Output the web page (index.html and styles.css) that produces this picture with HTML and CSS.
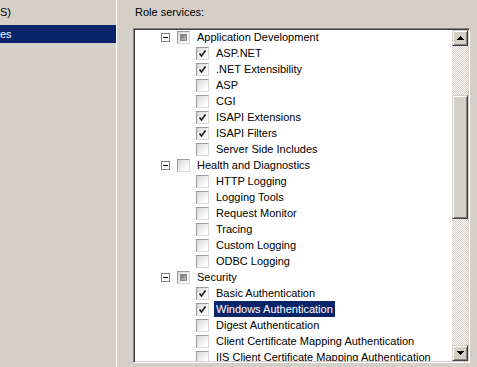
FILE: index.html
```html
<!DOCTYPE html>
<html lang="en">
<head>
    <meta charset="UTF-8">
    <title>Add Role Services</title>
    <link rel="stylesheet" href="styles.css">
</head>
<body>
    <div class="window">
        <aside class="nav">
            <div class="nav-item">S)</div>
            <div class="nav-item selected">es</div>
        </aside>

        <main class="content">
            <div class="label">Role services:</div>

            <div class="listbox">
                <div class="tree-view">
                    <ul class="tree">
                        <li class="row group"><span class="expander"></span><span class="check partial"></span><span class="text">Application Development</span></li>
                        <li class="row item"><span class="check checked"><svg width="9" height="9" viewBox="0 0 9 9"><polyline points="1.5,4.5 3.5,7 7.5,1.5"/></svg></span><span class="text">ASP.NET</span></li>
                        <li class="row item"><span class="check checked"><svg width="9" height="9" viewBox="0 0 9 9"><polyline points="1.5,4.5 3.5,7 7.5,1.5"/></svg></span><span class="text">.NET Extensibility</span></li>
                        <li class="row item"><span class="check"></span><span class="text">ASP</span></li>
                        <li class="row item"><span class="check"></span><span class="text">CGI</span></li>
                        <li class="row item"><span class="check checked"><svg width="9" height="9" viewBox="0 0 9 9"><polyline points="1.5,4.5 3.5,7 7.5,1.5"/></svg></span><span class="text">ISAPI Extensions</span></li>
                        <li class="row item"><span class="check checked"><svg width="9" height="9" viewBox="0 0 9 9"><polyline points="1.5,4.5 3.5,7 7.5,1.5"/></svg></span><span class="text">ISAPI Filters</span></li>
                        <li class="row item"><span class="check"></span><span class="text">Server Side Includes</span></li>

                        <li class="row group"><span class="expander"></span><span class="check"></span><span class="text">Health and Diagnostics</span></li>
                        <li class="row item"><span class="check"></span><span class="text">HTTP Logging</span></li>
                        <li class="row item"><span class="check"></span><span class="text">Logging Tools</span></li>
                        <li class="row item"><span class="check"></span><span class="text">Request Monitor</span></li>
                        <li class="row item"><span class="check"></span><span class="text">Tracing</span></li>
                        <li class="row item"><span class="check"></span><span class="text">Custom Logging</span></li>
                        <li class="row item"><span class="check"></span><span class="text">ODBC Logging</span></li>

                        <li class="row group"><span class="expander"></span><span class="check partial"></span><span class="text">Security</span></li>
                        <li class="row item"><span class="check checked"><svg width="9" height="9" viewBox="0 0 9 9"><polyline points="1.5,4.5 3.5,7 7.5,1.5"/></svg></span><span class="text">Basic Authentication</span></li>
                        <li class="row item"><span class="check checked"><svg width="9" height="9" viewBox="0 0 9 9"><polyline points="1.5,4.5 3.5,7 7.5,1.5"/></svg></span><span class="text selected">Windows Authentication</span></li>
                        <li class="row item"><span class="check"></span><span class="text">Digest Authentication</span></li>
                        <li class="row item"><span class="check"></span><span class="text">Client Certificate Mapping Authentication</span></li>
                        <li class="row item"><span class="check"></span><span class="text">IIS Client Certificate Mapping Authentication</span></li>
                    </ul>
                </div>

                <div class="scrollbar">
                    <div class="sb-btn"><svg width="7" height="4" viewBox="0 0 7 4" shape-rendering="crispEdges"><path d="M3 0h1v1h1v1h1v1h1v1h-7v-1h1v-1h1v-1h1z"/></svg></div>
                    <div class="sb-track before"></div>
                    <div class="sb-thumb"></div>
                    <div class="sb-track after"></div>
                    <div class="sb-btn"><svg width="7" height="4" viewBox="0 0 7 4" shape-rendering="crispEdges"><path d="M0 0h7v1h-1v1h-1v1h-1v1h-1v-1h-1v-1h-1v-1h-1z"/></svg></div>
                </div>
            </div>
        </main>
    </div>
</body>
</html>
```

FILE: styles.css
```css
body {
    margin: 0;
    background: #d4d0c8;
    font-family: 'Liberation Sans', Arial, sans-serif;
    font-size: 11px;
    color: #000;
}

.window {
    display: flex;
    height: 100vh;
    overflow: hidden;
}

/* left wizard steps */
.nav {
    flex: none;
    width: 116px;
    border-right: 1px solid #fff;
    padding-top: 3px;
}

.nav-item {
    height: 18px;
    line-height: 18px;
    margin-bottom: 4px;
    white-space: nowrap;
}

.nav-item.selected {
    background: #0a246a;
    color: #fff;
}

.content {
    padding: 6px 0 0 16px;
}

.label {
    line-height: 13px;
    padding-left: 2px;
    margin-bottom: 9px;
}

/* sunken list box */
.listbox {
    width: 337px;
    height: 335px;
    box-sizing: border-box;
    display: flex;
    padding: 1px;
    background: #fff;
    border: 1px solid;
    border-color: #808080 #fff #fff #808080;
    box-shadow: inset 1px 1px #404040, inset -1px -1px #d4d0c8;
}

.tree-view {
    flex: 1;
    overflow: hidden;
}

.tree {
    list-style: none;
    margin: -1px 0 0 0;
    padding: 0;
}

.row {
    display: flex;
    align-items: center;
    height: 16px;
    white-space: nowrap;
}

.row.group {
    padding-left: 26px;
}

.row.item {
    padding-left: 61px;
}

.expander {
    position: relative;
    flex: none;
    width: 9px;
    height: 9px;
    box-sizing: border-box;
    border: 1px solid #808080;
    background: #fff;
    margin-right: 7px;
}

.expander::after {
    content: "";
    position: absolute;
    left: 1px;
    top: 3px;
    width: 5px;
    height: 1px;
    background: #000;
}

.check {
    flex: none;
    width: 13px;
    height: 13px;
    box-sizing: border-box;
    display: flex;
    align-items: center;
    justify-content: center;
    margin-right: 5px;
    border: 1px solid;
    border-color: #9c9c9c #d8d8d8 #d8d8d8 #9c9c9c;
    background: linear-gradient(135deg, #d6d6d6, #fff 80%);
}

.check svg {
    fill: none;
    stroke: #1a1a1a;
    stroke-width: 1.6;
}

.check.partial::after {
    content: "";
    width: 7px;
    height: 7px;
    border: 1px solid #8a8a8a;
    box-sizing: border-box;
    background: linear-gradient(135deg, #6c6c6c, #c8c8c8);
}

.text {
    padding: 0 2px;
    line-height: 16px;
}

.text.selected {
    background: #0a246a;
    color: #fff;
}

/* classic scroll bar */
.scrollbar {
    flex: none;
    width: 16px;
    display: flex;
    flex-direction: column;
}

.sb-btn,
.sb-thumb {
    box-sizing: border-box;
    background: #d4d0c8;
    border: 1px solid;
    border-color: #d4d0c8 #404040 #404040 #d4d0c8;
    box-shadow: inset 1px 1px #fff, inset -1px -1px #808080;
}

.sb-btn {
    height: 16px;
    display: flex;
    align-items: center;
    justify-content: center;
}

.sb-btn svg {
    fill: #000;
}

.sb-track {
    background: repeating-conic-gradient(#d4d0c8 0 25%, #fff 0 50%) 0 0 / 2px 2px;
}

.sb-track.before {
    height: 49px;
}

.sb-thumb {
    height: 124px;
}

.sb-track.after {
    flex: 1;
}
```
